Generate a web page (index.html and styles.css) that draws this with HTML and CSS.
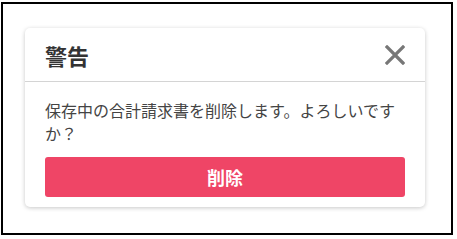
FILE: index.html
```html
<!DOCTYPE html>
<html lang="ja">
<head>
  <meta charset="UTF-8">
  <title>警告</title>
  <link rel="stylesheet" href="styles.css">
</head>
<body>
  <div class="frame">
    <div class="dialog">
      <div class="dialog-header">
        <h2 class="dialog-title">警告</h2>
        <button class="dialog-close" title="閉じる">
          <svg width="20" height="20" viewBox="0 0 20 20">
            <path d="M2 2 L18 18 M18 2 L2 18" stroke="#777" stroke-width="3.2" stroke-linecap="square"/>
          </svg>
        </button>
      </div>
      <div class="dialog-body">
        <p class="dialog-message">保存中の合計請求書を削除します。よろしいですか？</p>
        <button class="dialog-btn">削除</button>
      </div>
    </div>
  </div>
</body>
</html>
```

FILE: styles.css
```css
body {
  margin: 0;
  background: #fff;
  font-family: "Noto Sans CJK JP", "Noto Sans", sans-serif;
}
.frame {
  box-sizing: border-box;
  width: 452px;
  height: 233px;
  margin: 2px 0 0 1px;
  border: 2px solid #000;
  padding: 24px 0 0 22px;
}
.dialog {
  width: 400px;
  background: #fff;
  border-radius: 5px;
  box-shadow: 0 1px 4px rgba(0, 0, 0, 0.22);
}
.dialog-header {
  display: flex;
  align-items: center;
  justify-content: space-between;
  height: 53px;
  padding: 0 20px;
  border-bottom: 1px solid #d4d4d4;
}
.dialog-title {
  margin: 0;
  font-size: 22px;
  font-weight: bold;
  color: #333;
  line-height: 1;
}
.dialog-close {
  background: none;
  border: none;
  padding: 0;
  width: 20px;
  height: 20px;
  display: flex;
  cursor: pointer;
}
.dialog-body {
  padding: 17px 20px 10px 20px;
}
.dialog-message {
  margin: 0 0 12px 0;
  font-size: 16px;
  line-height: 23px;
  color: #444;
}
.dialog-btn {
  display: block;
  width: 360px;
  height: 40px;
  border: none;
  border-radius: 3px;
  background: #ef4566;
  color: #fff;
  font-family: inherit;
  font-size: 18px;
  font-weight: bold;
  cursor: pointer;
}
```
